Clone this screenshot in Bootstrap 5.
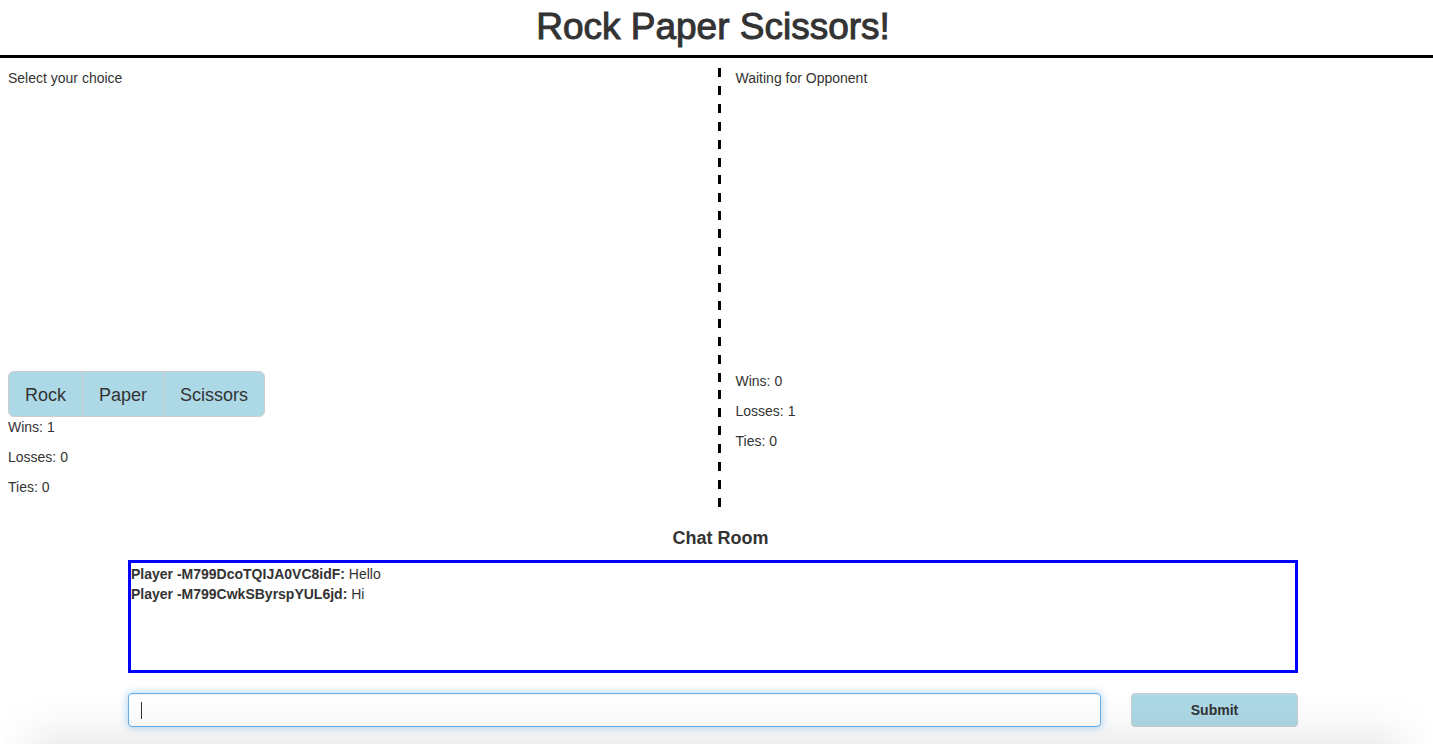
<!DOCTYPE html>
<html lang="en">
<head>
<meta charset="utf-8">
<meta name="viewport" content="width=device-width, initial-scale=1">
<title>Rock Paper Scissors!</title>
<link href="https://cdn.jsdelivr.net/npm/bootstrap@5.3.0/dist/css/bootstrap.min.css" rel="stylesheet">
<style>
  body { font-family: "Liberation Sans", Arial, sans-serif; font-size: 14px; line-height: 20px; color: #333; background: #fff; min-height: 100vh; overflow-x: hidden; }
  p { margin-bottom: 10px; }
  .page-title { font-size: 37px; line-height: 53px; font-weight: 400; -webkit-text-stroke: 1px #333; padding: 0 7px 2px 0; border-bottom: 3px solid #000; }
  .player { height: 439px; padding-left: 15px; }
  .player-one { padding-left: 8px; }
  .board { display: grid; grid-template-columns: calc(50% + 4px) 1fr; margin-top: 10px; }
  .divider { background: repeating-linear-gradient(#000 0 9px, transparent 9px calc((100% - 9px) / 24)) right top / 3px 100% no-repeat; }
  .arena { height: 303px; }
  .choices .btn { --bs-btn-color: #333; --bs-btn-bg: #add8e6; --bs-btn-border-color: #ccc; --bs-btn-hover-bg: #93c9db; font-size: 18px; line-height: 24px; padding: 11px 16px 9px; border-radius: 6px; }
  .chat-title { font-size: 18px; line-height: 20px; font-weight: 700; margin: 21px 0 12px; padding-left: 15px; }
  .chat { width: calc(100% - 14px); max-width: 1170px; margin-left: auto; margin-right: auto; }
  .chat-wrap { padding-right: 7px; }
  .chat-log { height: 113px; border: 3px solid #00f; padding-top: 1px; overflow: auto; margin-bottom: 20px; }
  .chat-form { gap: 30px; }
  .message, .message:focus { height: 34px; font-size: 14px; padding: 6px 12px; border: 1px solid #66afe9; border-radius: 4px; box-shadow: inset 0 1px 1px rgba(0,0,0,.075), 0 0 8px rgba(102,175,233,.6); caret-color: transparent; background: linear-gradient(#333, #333) 12px center / 1px 17px no-repeat #fff; }
  .send { flex: 0 0 167px; height: 34px; padding: 0; font-size: 14px; font-weight: 700; border-radius: 4px; --bs-btn-color: #333; --bs-btn-bg: #add8e6; --bs-btn-border-color: #ccc; --bs-btn-hover-bg: #93c9db; }
  .edge-shade { height: 50px; pointer-events: none; background: linear-gradient(transparent, rgba(0,0,0,.02) 50%, rgba(0,0,0,.065)); -webkit-mask-image: linear-gradient(90deg, transparent, #000 60px calc(100% - 60px), transparent); mask-image: linear-gradient(90deg, transparent, #000 60px calc(100% - 60px), transparent); }
</style>
</head>
<body>
<header><h1 class="page-title text-center mb-0">Rock Paper Scissors!</h1></header>
<main>
  <div class="board">
    <section class="player player-one divider">
      <div class="arena">Select your choice</div>
      <div class="btn-group choices d-inline-flex align-top" role="group" aria-label="Choices">
        <button type="button" class="btn">Rock</button>
        <button type="button" class="btn">Paper</button>
        <button type="button" class="btn">Scissors</button>
      </div>
      <p>Wins: 1</p><p>Losses: 0</p><p>Ties: 0</p>
    </section>
    <section class="player">
      <div class="arena">Waiting for Opponent</div>
      <p>Wins: 0</p><p>Losses: 1</p><p>Ties: 0</p>
    </section>
  </div>
  <div class="chat-wrap">
    <section class="chat">
      <h2 class="chat-title text-center">Chat Room</h2>
      <div class="chat-log">
        <div><strong>Player -M799DcoTQIJA0VC8idF:</strong> Hello</div>
        <div><strong>Player -M799CwkSByrspYUL6jd:</strong> Hi</div>
      </div>
      <form class="chat-form d-flex">
        <input type="text" class="message form-control" aria-label="Message">
        <button type="submit" class="send btn">Submit</button>
      </form>
    </section>
  </div>
</main>
<div class="edge-shade fixed-bottom"></div>
<script src="https://cdn.jsdelivr.net/npm/bootstrap@5.3.0/dist/js/bootstrap.bundle.min.js"></script>
</body>
</html>
